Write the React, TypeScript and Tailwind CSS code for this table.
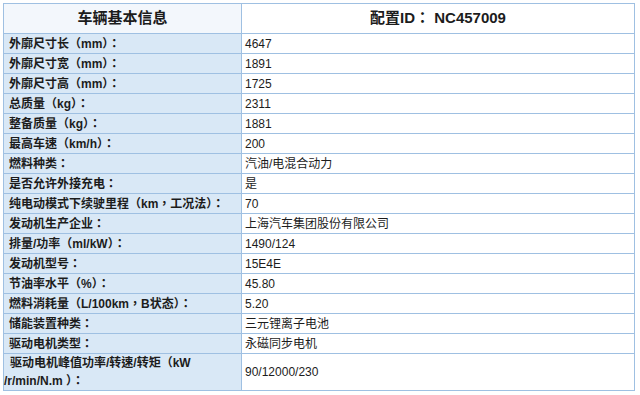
import React from "react";

const rows: [string, string][] = [
  ["外廓尺寸长（mm）：", "4647"],
  ["外廓尺寸宽（mm）：", "1891"],
  ["外廓尺寸高（mm）：", "1725"],
  ["总质量（kg）：", "2311"],
  ["整备质量（kg）：", "1881"],
  ["最高车速（km/h）：", "200"],
  ["燃料种类：", "汽油/电混合动力"],
  ["是否允许外接充电：", "是"],
  ["纯电动模式下续驶里程（km，工况法）：", "70"],
  ["发动机生产企业：", "上海汽车集团股份有限公司"],
  ["排量/功率（ml/kW）：", "1490/124"],
  ["发动机型号：", "15E4E"],
  ["节油率水平（%）：", "45.80"],
  ["燃料消耗量（L/100km，B状态）：", "5.20"],
  ["储能装置种类：", "三元锂离子电池"],
  ["驱动电机类型：", "永磁同步电机"],
];

const font = { fontFamily: '"Liberation Sans", "Noto Sans CJK TC", "Noto Sans CJK SC", sans-serif' };
const valFont = { fontFamily: '"Liberation Sans", "Noto Sans CJK SC", sans-serif' };

export default function App() {
  return (
    <div className="w-[640px] h-[395px] bg-white pt-[3px] pl-[3px]" style={font}>
      <div className="w-[632px] border border-[#9fc0e2] bg-[#9fc0e2] grid grid-cols-[237px_392px] gap-px text-[#1c1c1c]">
        <div className="h-[29px] bg-[#f3f7fc] flex items-center justify-center text-[15px] font-bold">
          车辆基本信息
        </div>
        <div className="h-[29px] bg-white flex items-center justify-center text-[15px] font-bold">
          配置ID： NC457009
        </div>
        {rows.map(([k, v]) => (
          <React.Fragment key={k}>
            <div className="h-[19px] bg-[#d9e8f6] flex items-center pl-[5px] text-[12px] font-bold whitespace-nowrap">
              {k}
            </div>
            <div className="h-[19px] bg-white flex items-center pl-[3px] text-[12px]" style={valFont}>
              {v}
            </div>
          </React.Fragment>
        ))}
        <div className="h-[36px] bg-[#d9e8f6] flex flex-col justify-center text-[12px] font-bold leading-[18px]">
          <div className="pl-[6px] whitespace-nowrap">驱动电机峰值功率/转速/转矩（kW</div>
          <div className="whitespace-nowrap">/r/min/N.m ）：</div>
        </div>
        <div className="h-[36px] bg-white flex items-center pl-[3px] text-[12px]" style={valFont}>
          90/12000/230
        </div>
      </div>
    </div>
  );
}
